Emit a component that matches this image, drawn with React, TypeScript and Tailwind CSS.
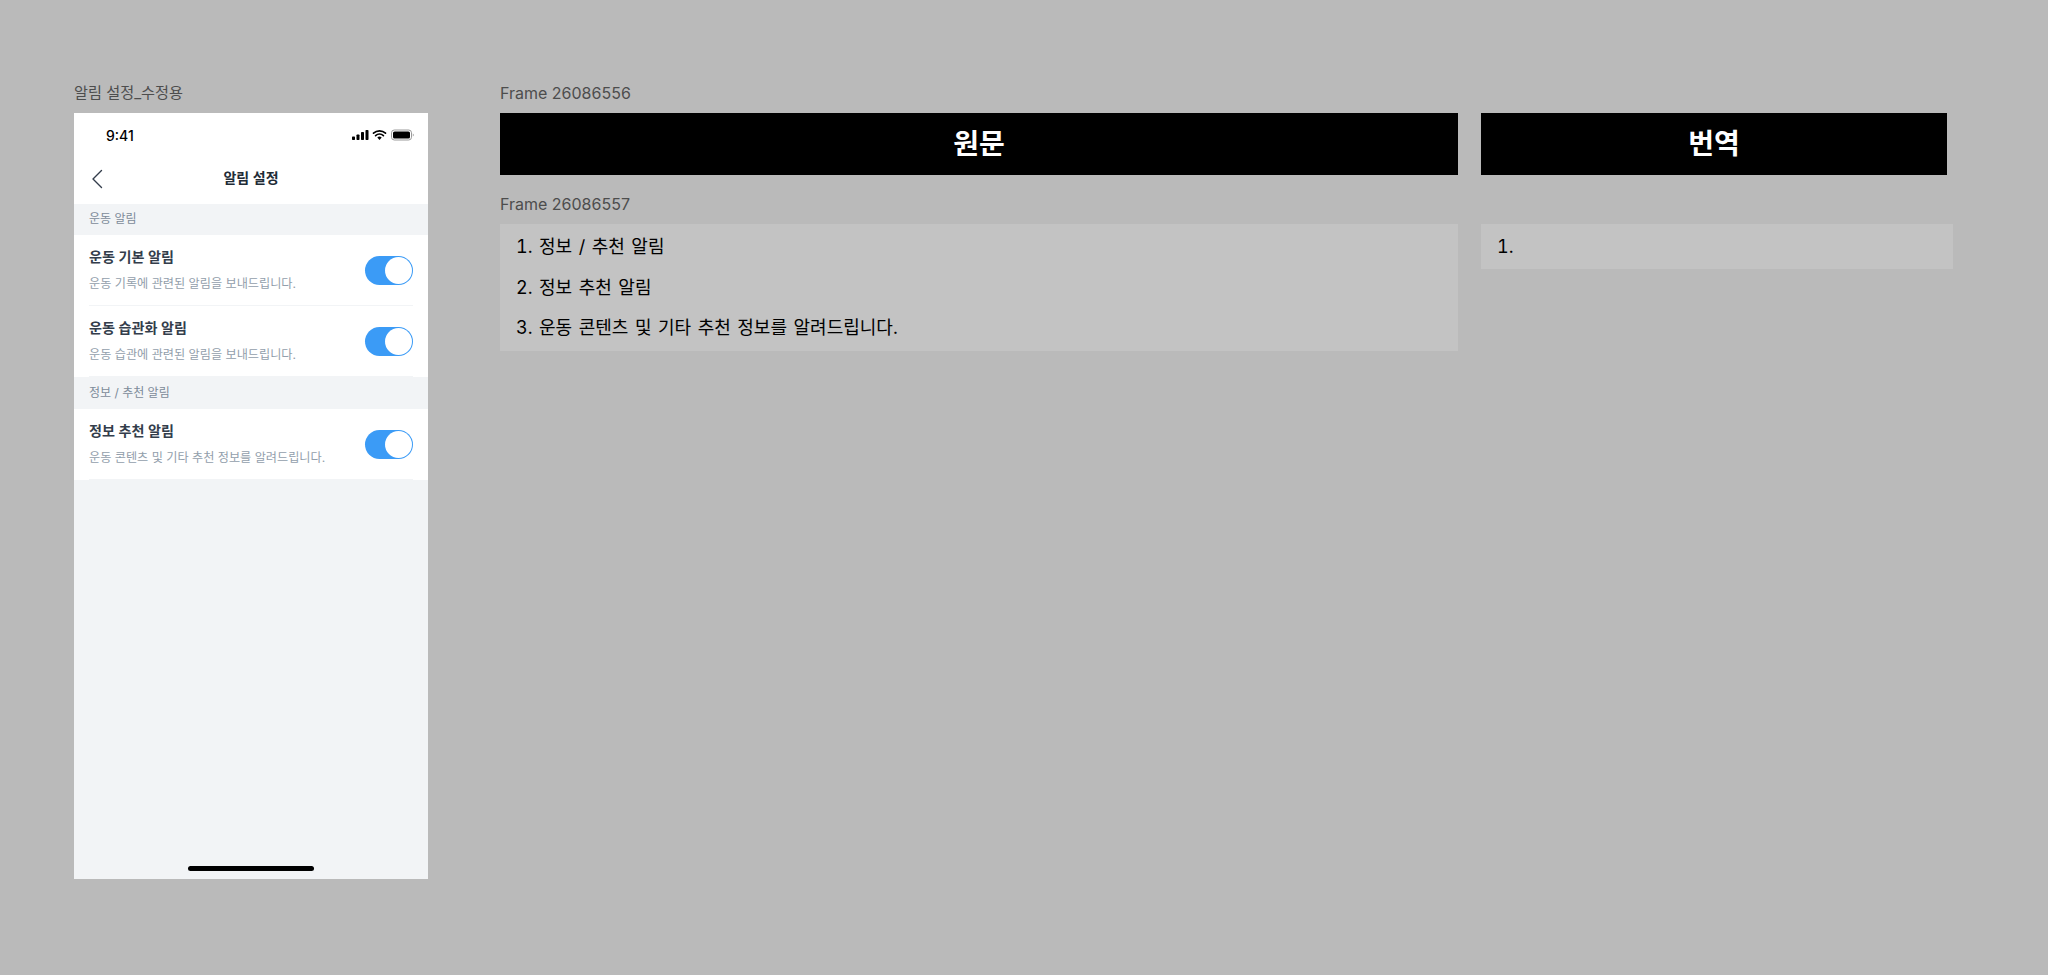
const sans = "font-['Inter','Noto_Sans_CJK_KR',sans-serif]";

const Toggle = () => (
  <div className="mt-[1px] flex h-[29px] w-[48px] shrink-0 items-center justify-end rounded-full bg-[#3b9bf6] pr-[1px]">
    <div className="h-[27px] w-[27px] rounded-full bg-white" />
  </div>
);

const SectionTitle = ({ children, className = "h-[31px]" }: { children: string; className?: string }) => (
  <div className={`flex items-center bg-[#f2f4f6] px-[15px] pb-[1px] text-[12px] text-[#7d8b99] ${className}`}>{children}</div>
);

const Row = ({ title, desc }: { title: string; desc: string }) => (
  <div className="bg-white px-[15px]">
    <div className="flex h-[71px] items-center justify-between border-b border-[#f2f4f6]">
      <div className="-mt-[1px]">
        <div className="text-[14.100px] leading-[20px] font-semibold text-[#333d4b]">{title}</div>
        <div className="mt-[9px] text-[12.150px] leading-[16px] text-[#929eab]">{desc}</div>
      </div>
      <Toggle />
    </div>
  </div>
);

const StatusIcons = () => (
  <svg width="62" height="12" viewBox="0 0 62 12" fill="none">
    <rect x="0" y="7.5" width="3" height="3.5" rx="0.7" fill="#000" />
    <rect x="4.5" y="5.5" width="3" height="5.5" rx="0.7" fill="#000" />
    <rect x="9" y="3" width="3" height="8" rx="0.7" fill="#000" />
    <rect x="13.5" y="1" width="3" height="10" rx="0.7" fill="#000" />
    <path d="M21.5 4.2a9 9 0 0 1 12 0M23.600 6.600a6 6 0 0 1 7.800 0" stroke="#000" strokeWidth="1.700" strokeLinecap="round" />
    <path d="M27.500 11l-2.200-2.400a3.200 3.200 0 0 1 4.400 0z" fill="#000" />
    <rect x="39.500" y="1" width="20" height="10" rx="2.800" stroke="#9a9a9a" strokeWidth="1" />
    <rect x="41" y="2.500" width="17" height="7" rx="1.600" fill="#000" />
    <path d="M60.800 4.500v3c.7-.3 1-.9 1-1.500s-.3-1.200-1-1.500z" fill="#9a9a9a" />
  </svg>
);

const Phone = () => (
  <div className="flex h-[766px] w-[354px] flex-col bg-[#f2f4f6]">
    <div className="bg-white">
      <div className="flex h-[44px] items-center justify-between pr-[14px] pl-[32px]">
        <span className="text-[14px] font-medium text-black">9:41</span>
        <StatusIcons />
      </div>
      <div className="relative flex h-[47px] items-center justify-center pb-[7px]">
        <svg className="absolute top-[12px] left-[17px]" width="12" height="20" viewBox="0 0 12 20" fill="none">
          <path d="M10.500 1.500L2 10l8.500 8.500" stroke="#333d4b" strokeWidth="1.400" strokeLinecap="round" strokeLinejoin="round" />
        </svg>
        <span className="text-[14px] font-semibold text-[#212b36]">알림 설정</span>
      </div>
    </div>
    <SectionTitle>운동 알림</SectionTitle>
    <Row title="운동 기본 알림" desc="운동 기록에 관련된 알림을 보내드립니다." />
    <Row title="운동 습관화 알림" desc="운동 습관에 관련된 알림을 보내드립니다." />
    <SectionTitle className="h-[32px]">정보 / 추천 알림</SectionTitle>
    <Row title="정보 추천 알림" desc="운동 콘텐츠 및 기타 추천 정보를 알려드립니다." />
    <div className="mt-auto mb-[8px] h-[5px] w-[126px] self-center rounded-full bg-black" />
  </div>
);

const Label = ({ children, className = "" }: { children: string; className?: string }) => (
  <div className={`leading-[20px] text-[#4d4d4d] ${className}`}>{children}</div>
);

const Header = ({ children, className }: { children: string; className: string }) => (
  <div className={`flex h-[62px] items-center justify-center bg-black text-[28px] font-bold text-white ${className}`}>{children}</div>
);

export default function App() {
  return (
    <div className={`flex h-[975px] w-[2048px] items-start overflow-hidden bg-[#bababa] pt-[83px] pl-[74px] ${sans}`}>
      <div>
        <Label className="mb-[10px] text-[15.200px]">알림 설정_수정용</Label>
        <Phone />
      </div>
      <div className="ml-[72px]">
        <Label className="mb-[10px] text-[16px]">Frame 26086556</Label>
        <div className="flex gap-[23px]">
          <Header className="w-[958px]">원문</Header>
          <Header className="w-[466px]">번역</Header>
        </div>
        <Label className="mt-[19px] mb-[10px] text-[16px]">Frame 26086557</Label>
        <div className="flex items-start gap-[23px] text-[18px] text-black tabular-nums [word-spacing:1.700px]">
          <div className="h-[127px] w-[958px] bg-[#c3c3c3] px-[16px] pt-[3px] leading-[40.500px]">
            <div>1. 정보 / 추천 알림</div>
            <div>2. 정보 추천 알림</div>
            <div>3. 운동 콘텐츠 및 기타 추천 정보를 알려드립니다.</div>
          </div>
          <div className="h-[45px] w-[472px] bg-[#c3c3c3] px-[16px] pt-[3px] leading-[40.500px]">1.</div>
        </div>
      </div>
    </div>
  );
}
